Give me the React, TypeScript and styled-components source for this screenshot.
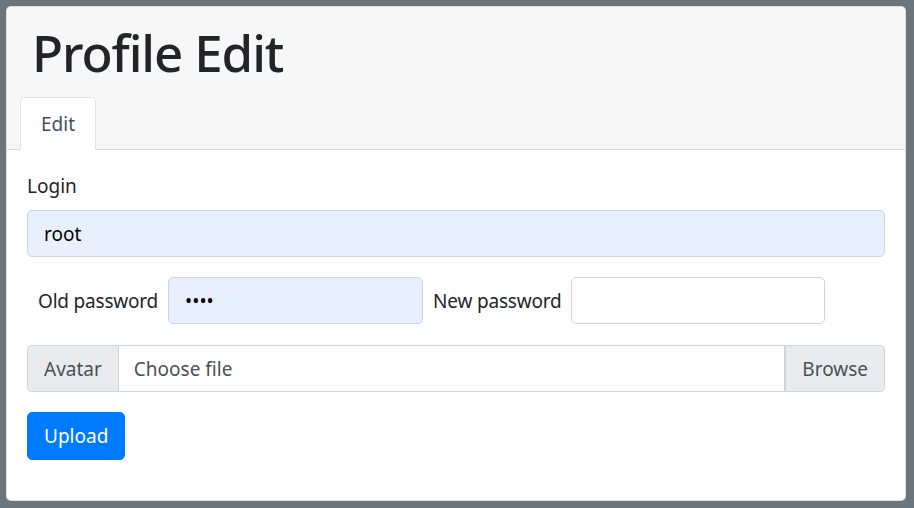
import React from "react";
import styled, { createGlobalStyle } from "styled-components";

const GlobalStyle = createGlobalStyle`
  html { background: #6c757d; }
  body {
    margin: 0;
    padding: 6px 8px 7px 6px;
    font-family: "Noto Sans", "Open Sans", sans-serif;
    font-size: 19px;
    color: #212529;
  }
  * { box-sizing: border-box; }
`;

const Card = styled.div`
  background: #fff;
  border: 1px solid rgba(0, 0, 0, 0.125);
  border-radius: 5px;
  height: 495px;
  overflow: hidden;
`;

const Header = styled.div`
  background: #f7f7f7;
  border-bottom: 1px solid rgba(0, 0, 0, 0.125);
  padding: 0 25px;
`;

const Title = styled.h1`
  margin: 0;
  height: 90px;
  padding-top: 13px;
  font-size: 51px;
  line-height: 64px;
  font-weight: 500;
  letter-spacing: -1.1px;
  color: #212529;
`;

const Tabs = styled.div`
  display: flex;
  margin: 0 -12px -1px;
`;

const Tab = styled.div`
  height: 53px;
  padding: 0 20px;
  display: flex;
  align-items: center;
  background: #fff;
  border: 1px solid #dee2e6;
  border-bottom-color: #fff;
  border-radius: 5px 5px 0 0;
  color: #495057;
`;

const Body = styled.div`
  padding: 20px;
  display: flex;
  flex-direction: column;
`;

const Label = styled.label`
  display: block;
  line-height: 29px;
  margin-top: 2px;
  margin-bottom: 9px;
`;

const Input = styled.input<{ $filled?: boolean; $width?: number }>`
  height: 47px;
  width: ${(p) => (p.$width ? `${p.$width}px` : "100%")};
  padding: 0 16px;
  font: inherit;
  color: #000;
  background: ${(p) => (p.$filled ? "#e8f0fe" : "#fff")};
  border: 1px solid #ced4da;
  border-radius: 5px;
  outline: none;
`;

const Group = styled.div`
  margin-bottom: 20px;
`;

const InlineRow = styled.div`
  display: flex;
  align-items: center;
  gap: 10px;
  padding-left: 11px;
  margin-bottom: 21px;
`;

const InlineLabel = styled.label`
  color: #212529;
  white-space: nowrap;
  letter-spacing: -0.2px;
`;

const FileGroup = styled.div`
  display: flex;
  height: 47px;
  margin-bottom: 20px;
`;

const Addon = styled.span<{ $side: "left" | "right" }>`
  display: flex;
  align-items: center;
  padding: 0 16px;
  background: #e9ecef;
  color: #495057;
  border: 1px solid #ced4da;
  border-radius: ${(p) => (p.$side === "left" ? "5px 0 0 5px" : "0 5px 5px 0")};
  ${(p) => (p.$side === "left" ? "border-right: none;" : "")}
`;

const FileField = styled.span`
  flex: 1;
  display: flex;
  align-items: center;
  padding: 0 15px;
  color: #495057;
  border: 1px solid #ced4da;
`;

const Button = styled.button`
  align-self: flex-start;
  height: 48px;
  padding: 0 16px;
  font: inherit;
  color: #fff;
  background: #007bff;
  border: 1px solid #007bff;
  border-radius: 5px;
`;

export default function App() {
  return (
    <>
      <GlobalStyle />
      <Card>
        <Header>
          <Title>Profile Edit</Title>
          <Tabs>
            <Tab>Edit</Tab>
          </Tabs>
        </Header>
        <Body>
          <Group>
            <Label>Login</Label>
            <Input $filled defaultValue="root" />
          </Group>
          <InlineRow>
            <InlineLabel>Old password</InlineLabel>
            <Input $filled $width={255} type="password" defaultValue="root" />
            <InlineLabel>New password</InlineLabel>
            <Input $width={254} type="password" />
          </InlineRow>
          <FileGroup>
            <Addon $side="left">Avatar</Addon>
            <FileField>Choose file</FileField>
            <Addon $side="right">Browse</Addon>
          </FileGroup>
          <Button>Upload</Button>
        </Body>
      </Card>
    </>
  );
}
